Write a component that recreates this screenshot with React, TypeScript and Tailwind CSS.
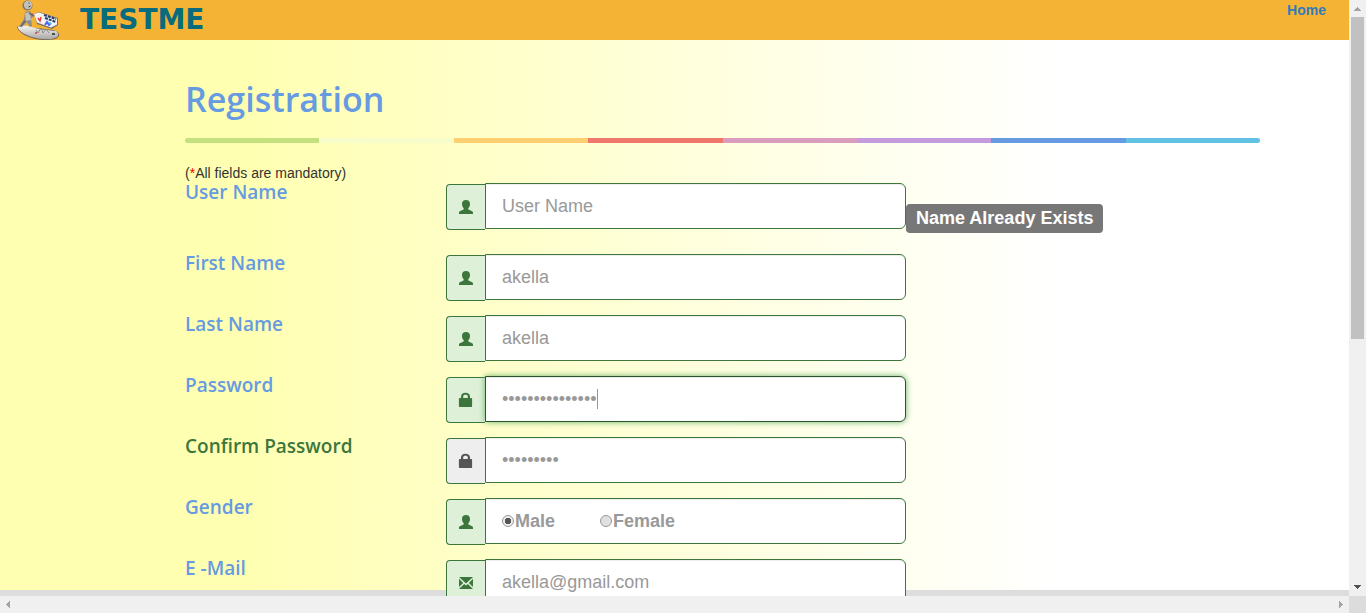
import type { ReactNode } from "react";

const stripes = [
  "bg-[#c4e17f]", "bg-[#f7fdca]", "bg-[#fecf71]", "bg-[#f0776c]",
  "bg-[#db9dbe]", "bg-[#c49cde]", "bg-[#669ae1]", "bg-[#62c2e4]",
];

function UserIcon() {
  return (
    <svg viewBox="0 0 16 16" className="size-4 fill-current" aria-hidden="true">
      <path d="M8 1C10.600 1 12 2.500 12 5c0 1.600-.6 3.100-1.500 4.100-.5.600-.3 1.400.4 1.700l2.800 1.200c.9.400 1.300 1 1.300 1.900v1.100H1v-1.100c0-.9.400-1.500 1.300-1.900l2.800-1.200c.7-.3.900-1.100.4-1.700C4.600 8.100 4 6.600 4 5c0-2.500 1.400-4 4-4z" />
    </svg>
  );
}

function LockIcon() {
  return (
    <svg viewBox="0 0 16 16" className="size-4 fill-current" aria-hidden="true">
      <path fillRule="evenodd" d="M3 6V4.500C3 2.200 4.700.8 7.500.8S12 2.200 12 4.500V6h1.300c.5 0 .8.300.8.800v7.400c0 .5-.3.800-.8.800H1.700c-.5 0-.8-.3-.8-.8V6.800c0-.5.300-.8.800-.8zm2.200 0h4.600V4.500C9.800 3.400 9 2.800 7.500 2.800S5.200 3.400 5.200 4.500z" />
    </svg>
  );
}

function MailIcon() {
  return (
    <svg viewBox="0 0 16 16" className="size-4 fill-current" aria-hidden="true">
      <path d="M1 2h14L8 8.500zM1 3.800 5.200 8 1 12zM15 3.800 10.800 8 15 12zM6.200 8.900 8 10.600l1.800-1.700L15 14H1z" />
    </svg>
  );
}

function Mascot() {
  return (
    <svg viewBox="0 0 44 40" className="h-10 w-11" aria-hidden="true">
      <defs>
        <linearGradient id="silver" x1="0" y1="0" x2="0" y2="1">
          <stop offset="0" stopColor="#f6f6f4" />
          <stop offset="1" stopColor="#a9a7a5" />
        </linearGradient>
      </defs>
      <path d="M1 27c4-3 11-1 17 1 7 1 17 1 22 3 4 2 4 5 1 7-3 2-9 2-14 2C14 39 3 34 1 27z" fill="#6e6256" />
      <path d="M2 26.500c5-2 11-1 17 1.500 7 2 15 2 21 3 4 3 2 6-1 7-4 2-9 1-13 1C15 38 4 33 2 28z" fill="url(#silver)" />
      <path d="M18 14l5-2 19 6v7l-6 4-15-5z" fill="#77706c" />
      <path d="M18 14l5-1.500 18 6v6l-6 3-14-5z" fill="#f3f3f1" />
      <path d="M28 15l12 4M29 18l11 4" stroke="#243f69" strokeWidth="2" strokeDasharray="3 1" />
      <path d="M22 18l2 3 1-4M17 14l-2 1" stroke="#e83a3a" strokeWidth="1.500" fill="none" />
      <path d="M29 25l2-3 2 3 2-2" stroke="#565fe8" strokeWidth="2" fill="none" />
      <path d="M32 22l3 2" stroke="#43c5ed" strokeWidth="1.500" />
      <path d="M9 12l5-1 3 6-2 2 1 7-2 1-3-5-5 5H3l5-8z" fill="#8d8b88" />
      <path d="M9 13l5-1 1 8-5 1z" fill="#c4c2bf" />
      <path d="M13 13l5 3M9 21l-4 5" stroke="#6c6a68" strokeWidth="1.500" />
      <circle cx="11.500" cy="5.500" r="5" fill="#777470" />
      <circle cx="12" cy="5" r="4.200" fill="#c3c1be" />
      <path d="M12.500 3h1M12.500 7l2-1" stroke="#34312f" />
      <path d="M20 30l2 3 3-5 2 5 3-4 3 4" stroke="#888" fill="none" />
      <path d="M19 33h2" stroke="#dc3c3c" strokeWidth="1.500" />
      <path d="M36 34h3" stroke="#242424" strokeWidth="1.500" />
    </svg>
  );
}

const control =
  "h-[46px] min-w-0 flex-1 rounded-r-md border border-[#3c763d] bg-white px-4 text-lg text-[#999] placeholder:text-[#999] shadow-[inset_0_1px_1px_rgba(0,0,0,0.075)] outline-none";

type RowProps = {
  id: string;
  label: string;
  icon: ReactNode;
  children: ReactNode;
  neutral?: boolean;
  valid?: boolean;
  note?: string;
};

function Row({ id, label, icon, children, neutral, valid, note }: RowProps) {
  return (
    <div className={`flex items-start ${note ? "mb-[21px]" : "mb-[14px]"}`}>
      <label
        htmlFor={id}
        className={`w-[261px] shrink-0 font-[Trebuchet_MS,Open_Sans,sans-serif] text-[19px] leading-[18px] font-semibold ${valid ? "text-[#3c763d]" : "text-[#669ae1]"}`}
      >
        {label}
      </label>
      <div className="flex h-[47px] w-[460px] shrink-0 items-start">
        <span
          className={`mt-px flex h-[46px] w-[39px] shrink-0 items-center justify-center rounded-l border border-r-0 border-[#3c763d] ${neutral ? "bg-[#eee] text-[#555]" : "bg-[#dff0d8] text-[#3c763d]"}`}
        >
          {icon}
        </span>
        {children}
      </div>
      {note && (
        <span className="mt-[21px] rounded bg-[#777] px-[10px] text-lg leading-[29px] font-bold whitespace-nowrap text-white">
          {note}
        </span>
      )}
    </div>
  );
}

function Radio({ id, label, checked }: { id: string; label: string; checked?: boolean }) {
  return (
    <label htmlFor={id} className="flex items-center">
      <input
        id={id}
        type="radio"
        name="gender"
        defaultChecked={checked}
        className="size-3 appearance-none rounded-full border border-[#999] bg-[#e0e0e0] checked:bg-[radial-gradient(circle,#555_0_3px,#eee_3px)]"
      />
      <span className="pl-px leading-6">{label}</span>
    </label>
  );
}

function Arrow({ d, dark }: { d: string; dark?: boolean }) {
  return (
    <svg viewBox="0 0 17 17" className={`size-[17px] ${dark ? "fill-[#505050]" : "fill-[#a3a3a3]"}`} aria-hidden="true">
      <path d={d} shapeRendering="crispEdges" />
    </svg>
  );
}

export default function App() {
  return (
    <div className="flex h-screen flex-col overflow-hidden bg-white font-[Liberation_Sans,Arial,sans-serif] text-[#333]">
      <div className="flex min-h-0 flex-1">
        <div className="flex min-w-0 flex-1 flex-col">
          <header className="flex h-10 shrink-0 items-start justify-between bg-[#f5b335]">
            <div className="flex items-center pl-4">
              <Mascot />
              <span className="pl-5 font-[DejaVu_Sans,sans-serif] text-[28px] leading-[38px] font-bold text-[#096b7b]">TESTME</span>
            </div>
            <a href="#home" className="pr-[23px] text-sm leading-5 font-bold text-[#337ab7]">Home</a>
          </header>
          <main className="min-h-0 flex-1 overflow-hidden bg-[#ddd] bg-[linear-gradient(to_right,#ffffb2_18%,#ffffff_78%)] bg-[length:100%_calc(100%-6px)] bg-no-repeat pr-[89px] pl-[185px]">
            <h1 className="pt-[39px] font-[Trebuchet_MS,Open_Sans,sans-serif] text-[34px] leading-10 font-semibold text-[#669ae1]">Registration</h1>
            <div className="mt-[19px] flex h-[5px] overflow-hidden rounded-[5px]">
              {stripes.map((color) => <span key={color} className={`flex-1 ${color}`} />)}
            </div>
            <form className="pt-5">
              <p className="text-sm leading-5">(<span className="text-[#f00]">*</span>All fields are mandatory)</p>
              <Row id="user" label="User Name" icon={<UserIcon />} note="Name Already Exists">
                <input id="user" type="text" placeholder="User Name" className={control} />
              </Row>
              <Row id="first" label="First Name" icon={<UserIcon />}>
                <input id="first" type="text" defaultValue="akella" className={control} />
              </Row>
              <Row id="last" label="Last Name" icon={<UserIcon />}>
                <input id="last" type="text" defaultValue="akella" className={control} />
              </Row>
              <Row id="password" label="Password" icon={<LockIcon />}>
                <div className="relative flex min-w-0 flex-1">
                  <input
                    id="password"
                    type="password"
                    defaultValue="akellaakella123"
                    className="h-[46px] min-w-0 flex-1 rounded-r-md border border-[#2b542c] bg-white px-4 text-lg text-[#999] caret-transparent shadow-[inset_0_1px_1px_rgba(0,0,0,0.075),0_0_6px_#67b168] outline-none"
                  />
                  <span className="pointer-events-none absolute top-[13px] left-28 h-5 w-px bg-[#999]" />
                </div>
              </Row>
              <Row id="confirm" label="Confirm Password" icon={<LockIcon />} neutral valid>
                <input id="confirm" type="password" defaultValue="akella123" className={control} />
              </Row>
              <Row id="male" label="Gender" icon={<UserIcon />}>
                <div className={`flex items-center gap-[45px] font-bold ${control}`}>
                  <Radio id="male" label="Male" checked />
                  <Radio id="female" label="Female" />
                </div>
              </Row>
              <Row id="email" label="E -Mail" icon={<MailIcon />}>
                <input id="email" type="email" defaultValue="akella@gmail.com" className={control} />
              </Row>
            </form>
          </main>
        </div>
        <div className="flex w-[17px] shrink-0 flex-col items-center bg-[#f0f0f0]">
          <Arrow d="M8 7h1v1h1v1h1v1h1v1H5v-1h1V9h1V8h1z" />
          <div className="h-[322px] w-[13px] bg-[#c1c1c1]" />
          <div className="flex-1" />
          <Arrow dark d="M5 6h7v1h-1v1h-1v1H9v1H8V9H7V8H6V7H5z" />
        </div>
      </div>
      <div className="flex h-[17px] shrink-0 bg-[#f0f0f0]">
        <Arrow d="M10 5v7H9v-1H8v-1H7V9H6V8h1V7h1V6h1V5z" />
        <div className="flex-1" />
        <Arrow d="M7 5v7h1v-1h1v-1h1V9h1V8h-1V7H9V6H8V5z" />
        <div className="w-[17px] bg-[#dcdcdc]" />
      </div>
    </div>
  );
}
